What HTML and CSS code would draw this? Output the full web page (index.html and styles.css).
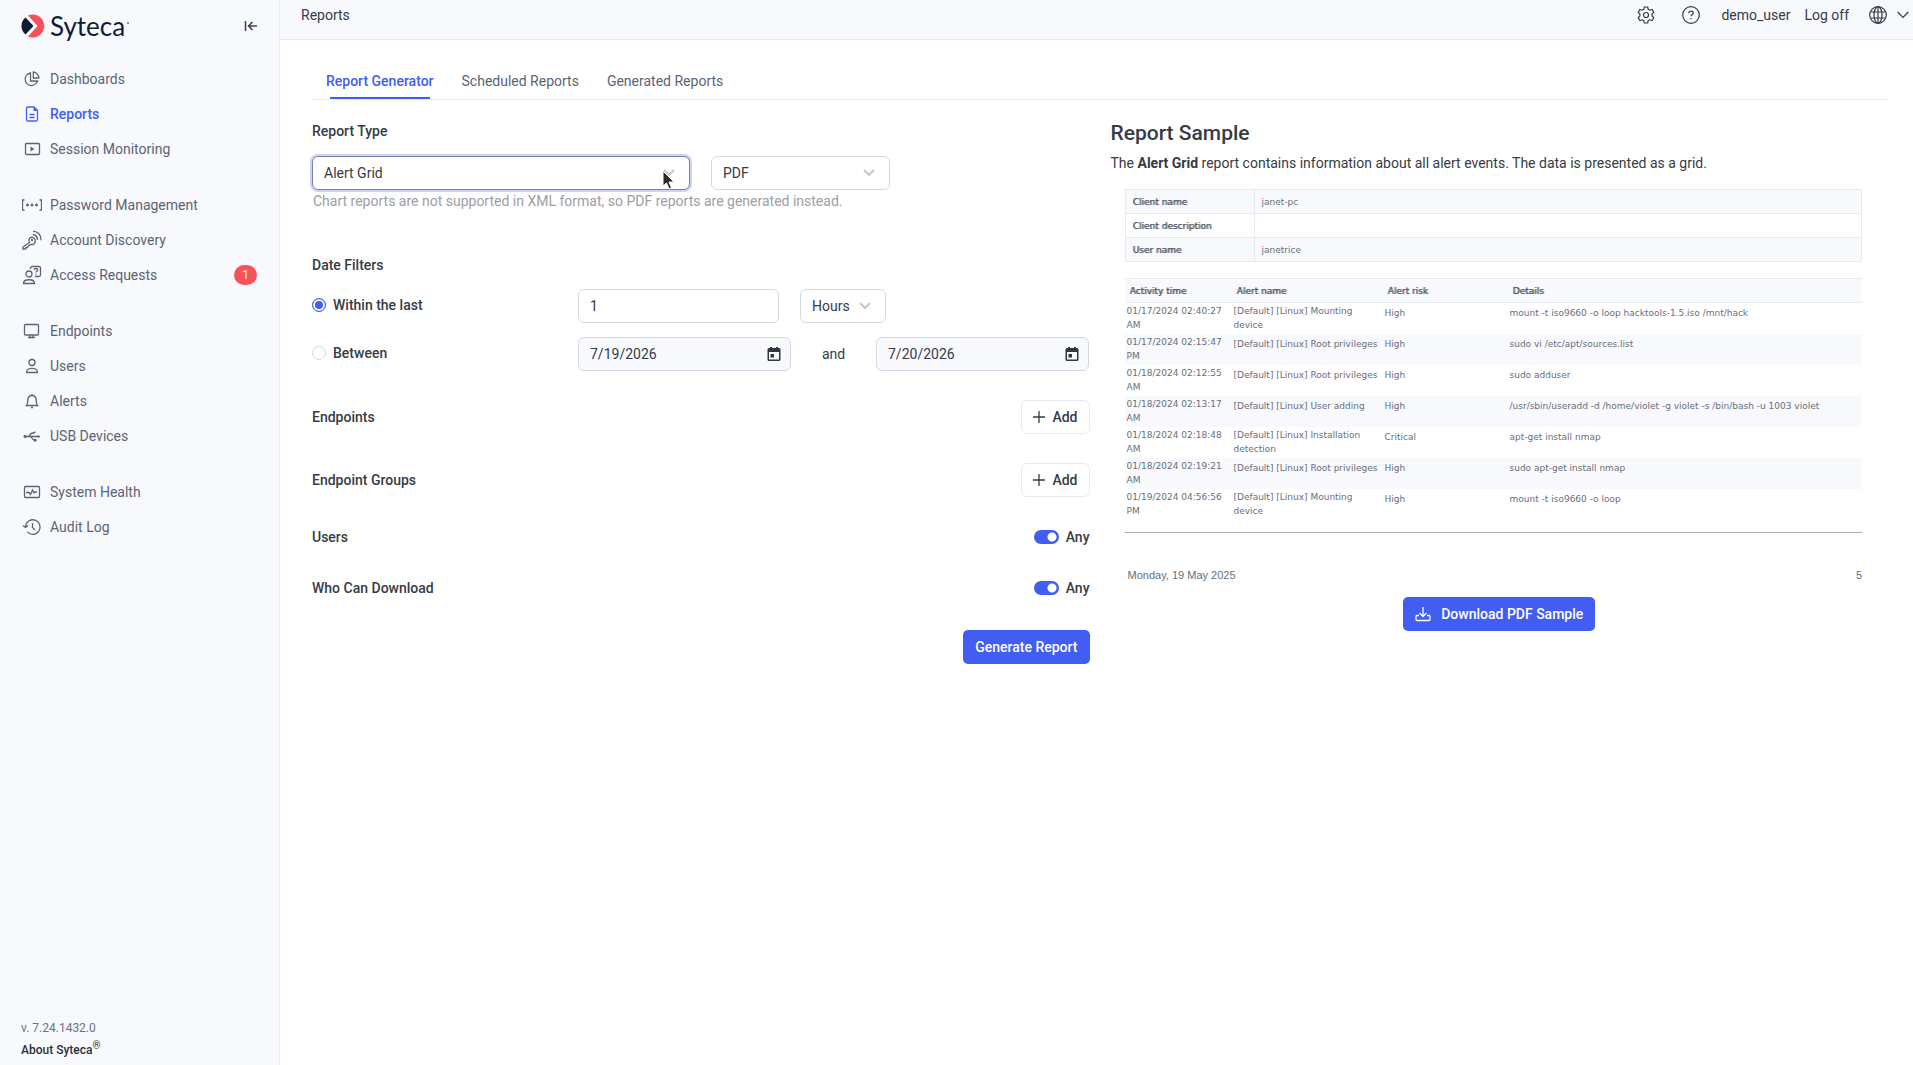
FILE: index.html
```
<!DOCTYPE html>
<html lang="en">
<head>
<meta charset="utf-8">
<meta name="viewport" content="width=device-width, initial-scale=1.0">
<title>Reports - Syteca</title>
<link rel="stylesheet" href="styles.css">
</head>
<body>

<aside class="sidebar">
  <div class="brand">
    <a class="logo" href="#">
      <svg width="24" height="24" viewBox="0 0 24 24">
        <path fill="#f95159" d="M7 1.5A11.5 11.5 0 1 1 7 22.500L16.500 12z"/>
        <path fill="#0f1c34" d="M4.500 3.500L12.500 12l-8 8.500C1.500 18 .5 15 .5 12s1-6 4-8.500z"/>
      </svg>
      <span>Syteca</span><i class="tm"></i>
    </a>
    <button class="collapse" aria-label="Collapse menu">
      <svg width="14" height="12" viewBox="0 0 14 12" fill="none" stroke="#33415c" stroke-width="1.5"><path d="M1.500 1v10M13 6H5M8.500 2L4.500 6l4 4"/></svg>
    </button>
  </div>

  <nav class="menu">
    <ul>
      <li><a href="#"><svg viewBox="0 0 20 20"><path d="M8.500 4A6.300 6.300 0 1 0 15.500 12H8.500z"/><path d="M11.300 3v6h5.500a6 6 0 0 0-5.500-6z"/></svg>Dashboards</a></li>
      <li><a href="#" class="active"><svg viewBox="0 0 20 20"><path d="M6 3h6l3.500 3.500V15.500a1.500 1.500 0 0 1-1.500 1.500H6a1.500 1.500 0 0 1-1.500-1.500v-11A1.500 1.500 0 0 1 6 3zM7.500 10.500h5M7.500 13.500h5"/><path class="solid" d="M11.500 3v4h4z"/></svg>Reports</a></li>
      <li><a href="#"><svg viewBox="0 0 20 20"><rect x="3.500" y="4.500" width="14" height="11" rx="1"/><path class="solid" d="M8.500 7.500v5l4-2.500z"/></svg>Session Monitoring</a></li>
    </ul>
    <ul>
      <li><a href="#"><svg viewBox="0 0 20 20"><path d="M2.500 5H.5v10h2M17.500 5h2v10h-2M4 10h3M5.500 8.500v3M8.500 10h3M10 8.500v3M13 10h3M14.500 8.500v3"/></svg>Password Management</a></li>
      <li><a href="#"><svg viewBox="0 0 20 20"><path d="M7.500 12.500L1 17v2h2.500l.5-1.500h1.500L6.500 16l2-1.500c4 .5 5.500-2 4.500-5-1-2.500-4-3-5.500-1-1 1.200-.8 2.700 0 4z"/><circle cx="10" cy="10" r=".5"/><path d="M11 4.500c3 .5 4.500 2.500 4.500 5.500M11 1.200c5 .5 8 4 8 9"/></svg>Account Discovery</a></li>
      <li><a href="#"><svg viewBox="0 0 20 20"><circle cx="7" cy="9" r="3"/><path d="M1.500 18.500c0-5 11-5 11 0zM8.500 4V3.500A2 2 0 0 1 10.500 1.500h6.500a1.500 1.500 0 0 1 1.500 1.500v7a1.500 1.500 0 0 1-1.500 1.500h-4"/><path d="M12.200 5c0-2 3.500-2 3.500 0 0 1.300-1.700 1.300-1.700 2.500M14 8.700v1"/></svg>Access Requests<span class="badge">1</span></a></li>
    </ul>
    <ul>
      <li><a href="#"><svg viewBox="0 0 20 20"><rect x="2.500" y="3.500" width="14" height="10.500" rx="1"/><path d="M6 16.500h7M8 14v2.500M11 14v2.500"/></svg>Endpoints</a></li>
      <li><a href="#"><svg viewBox="0 0 20 20"><circle cx="10" cy="6.500" r="3"/><path d="M4.500 16.500c0-5.500 11-5.500 11 0z"/></svg>Users</a></li>
      <li><a href="#"><svg viewBox="0 0 20 20"><path d="M4.500 14.500h11c-1.500-1.500-1-4-1.500-6.500-.5-2.500-2-3.500-4-3.500S6.500 5.500 6 8c-.5 2.500 0 5-1.500 6.500zM10 3v1.500M9 16.500h2"/></svg>Alerts</a></li>
      <li><a href="#"><svg viewBox="0 0 20 20"><path d="M3 10.500h14M6 10.500C8 10.500 8 7 10.500 7H12M8 10.500c2 0 2 3.500 4 3.500h1"/><circle class="solid" cx="3" cy="10.500" r="1.500"/><circle class="solid" cx="12.500" cy="6.500" r="1"/><path class="solid" d="M12 13h2.500v2.500H12zM16 9l2.500 1.500L16 12z"/></svg>USB Devices</a></li>
    </ul>
    <ul>
      <li><a href="#"><svg viewBox="0 0 20 20"><rect x="2.500" y="4.500" width="15" height="11" rx="1"/><path d="M4 10.500h3l1.500 2 2-4.500 1.500 3 1-1h2"/></svg>System Health</a></li>
      <li><a href="#"><svg viewBox="0 0 20 20"><path d="M3.500 9.500a7.300 7.300 0 1 1 1.800 5.400M1 8.500l2.500 2 2.500-2M10.500 6v4.500l2.500 2.500"/></svg>Audit Log</a></li>
    </ul>
  </nav>

  <footer class="about">
    <span>v. 7.24.1432.0</span>
    <a href="#">About Syteca<sup>®</sup></a>
  </footer>
</aside>

<div class="page">
  <header class="topbar">
    <h1>Reports</h1>
    <div class="tools">
      <button aria-label="Settings">
        <svg width="18" height="18" viewBox="0 0 18 18"><path d="M7.300 1h3.400l.5 2.300 1.600.9 2.300-.7 1.700 3-1.700 1.600v1.800l1.700 1.600-1.700 3-2.300-.7-1.600.9-.5 2.300H7.300l-.5-2.300-1.600-.9-2.300.7-1.700-3 1.700-1.600V8.100L1.200 6.500l1.700-3 2.300.7 1.600-.9z"/><circle cx="9" cy="9" r="2.500"/></svg>
      </button>
      <button aria-label="Help">
        <svg width="18" height="18" viewBox="0 0 18 18"><circle cx="9" cy="9" r="8.300"/><path d="M6.800 7.300c0-3 4.500-3 4.500-.3 0 1.500-2.200 1.500-2.200 3.300M9 12v1.300"/></svg>
      </button>
      <a href="#" class="user">demo_user</a>
      <a href="#" class="logoff">Log off</a>
      <button class="lang" aria-label="Language">
        <svg width="18" height="18" viewBox="0 0 18 18"><circle cx="9" cy="9" r="8.300"/><ellipse cx="9" cy="9" rx="4" ry="8.300"/><path d="M9 1v16M2 6h14M2 12h14"/></svg>
        <svg width="12" height="8" viewBox="0 0 12 8"><path d="M.7 1L6 6.500 11.300 1"/></svg>
      </button>
    </div>
  </header>

  <nav class="tabs">
    <a href="#" class="active">Report Generator</a>
    <a href="#">Scheduled Reports</a>
    <a href="#">Generated Reports</a>
  </nav>

  <main class="columns">
    <form class="generator">
      <label class="title" for="report-type">Report Type</label>
      <div class="types">
        <div class="select focused">
          <select id="report-type"><option>Alert Grid</option></select>
          <svg class="arrow" viewBox="0 0 12 8"><path d="M1 1l5 5 5-5"/></svg>
          <svg class="pointer" width="14" height="20" viewBox="0 0 14 20"><path d="M1 1v15l3.500-3 2.500 6 2.500-1-2.500-6H12z"/></svg>
        </div>
        <div class="select format">
          <select aria-label="Report format"><option>PDF</option></select>
          <svg class="arrow" viewBox="0 0 12 8"><path d="M1 1l5 5 5-5"/></svg>
        </div>
      </div>
      <p class="hint">Chart reports are not supported in XML format, so PDF reports are generated instead.</p>

      <fieldset class="dates">
        <legend class="title">Date Filters</legend>
        <div class="row">
          <label class="radio"><input type="radio" name="range" checked>Within the last</label>
          <input class="field amount" type="text" value="1" aria-label="Amount">
          <div class="select unit">
            <select aria-label="Unit"><option>Hours</option></select>
            <svg class="arrow" viewBox="0 0 12 8"><path d="M1 1l5 5 5-5"/></svg>
          </div>
        </div>
        <div class="row">
          <label class="radio"><input type="radio" name="range">Between</label>
          <div class="field date">
            <input type="text" value="7/19/2026" aria-label="From">
            <button type="button" aria-label="Pick start date"><svg width="14" height="14" viewBox="0 0 14 14"><path fill-rule="evenodd" d="M2 1h1V0h2v1h4V0h2v1h1a1.500 1.500 0 0 1 1.500 1.500v10A1.500 1.500 0 0 1 12 14H2A1.500 1.500 0 0 1 .5 12.500v-10A1.500 1.500 0 0 1 2 1zM2 5v7.500h10V5zM3.500 7H7v3.500H3.500z"/></svg></button>
          </div>
          <span class="and">and</span>
          <div class="field date">
            <input type="text" value="7/20/2026" aria-label="To">
            <button type="button" aria-label="Pick end date"><svg width="14" height="14" viewBox="0 0 14 14"><path fill-rule="evenodd" d="M2 1h1V0h2v1h4V0h2v1h1a1.500 1.500 0 0 1 1.500 1.500v10A1.500 1.500 0 0 1 12 14H2A1.500 1.500 0 0 1 .5 12.500v-10A1.500 1.500 0 0 1 2 1zM2 5v7.500h10V5zM3.500 7H7v3.500H3.500z"/></svg></button>
          </div>
        </div>
      </fieldset>

      <div class="option">
        <span class="title">Endpoints</span>
        <button type="button" class="add"><svg width="12" height="12" viewBox="0 0 12 12"><path d="M6 0v12M0 6h12"/></svg>Add</button>
      </div>
      <div class="option">
        <span class="title">Endpoint Groups</span>
        <button type="button" class="add"><svg width="12" height="12" viewBox="0 0 12 12"><path d="M6 0v12M0 6h12"/></svg>Add</button>
      </div>
      <div class="option switch-row">
        <span class="title">Users</span>
        <label class="switch"><input type="checkbox" checked>Any</label>
      </div>
      <div class="option switch-row">
        <span class="title">Who Can Download</span>
        <label class="switch"><input type="checkbox" checked>Any</label>
      </div>
      <button type="button" class="primary generate">Generate Report</button>
    </form>

    <section class="sample">
      <h2>Report Sample</h2>
      <p>The <b>Alert Grid</b> report contains information about all alert events. The data is presented as a grid.</p>

      <div class="sheet">
        <table class="client">
          <tr><th scope="row">Client name</th><td>janet-pc</td></tr>
          <tr><th scope="row">Client description</th><td></td></tr>
          <tr><th scope="row">User name</th><td>janetrice</td></tr>
        </table>

        <table class="alerts">
          <thead>
            <tr><th class="time">Activity time</th><th class="name">Alert name</th><th class="risk">Alert risk</th><th>Details</th></tr>
          </thead>
          <tbody>
            <tr><td>01/17/2024 02:40:27 AM</td><td>[Default] [Linux] Mounting device</td><td>High</td><td>mount -t iso9660 -o loop hacktools-1.5.iso /mnt/hack</td></tr>
            <tr><td>01/17/2024 02:15:47 PM</td><td class="single">[Default] [Linux] Root privileges</td><td>High</td><td>sudo vi /etc/apt/sources.list</td></tr>
            <tr><td>01/18/2024 02:12:55 AM</td><td class="single">[Default] [Linux] Root privileges</td><td>High</td><td>sudo adduser</td></tr>
            <tr><td>01/18/2024 02:13:17 AM</td><td class="single">[Default] [Linux] User adding</td><td>High</td><td>/usr/sbin/useradd -d /home/violet -g violet -s /bin/bash -u 1003 violet</td></tr>
            <tr><td>01/18/2024 02:18:48 AM</td><td>[Default] [Linux] Installation detection</td><td>Critical</td><td>apt-get install nmap</td></tr>
            <tr><td>01/18/2024 02:19:21 AM</td><td class="single">[Default] [Linux] Root privileges</td><td>High</td><td>sudo apt-get install nmap</td></tr>
            <tr><td>01/19/2024 04:56:56 PM</td><td>[Default] [Linux] Mounting device</td><td>High</td><td>mount -t iso9660 -o loop</td></tr>
          </tbody>
        </table>

        <div class="sheet-footer"><span>Monday, 19 May 2025</span><span>5</span></div>
      </div>

      <button type="button" class="primary download">
        <svg width="16" height="16" viewBox="0 0 16 16"><path d="M8 1v9M4.500 7L8 10.500 11.500 7M4 9.500H2a1 1 0 0 0-1 1v3a1 1 0 0 0 1 1h12a1 1 0 0 0 1-1v-3a1 1 0 0 0-1-1h-2"/></svg>
        Download PDF Sample
      </button>
    </section>
  </main>
</div>

</body>
</html>
```
FILE: styles.css
```
* { box-sizing: border-box; }

body {
  margin: 0;
  min-height: 100vh;
  display: flex;
  font-family: Roboto, Arial, sans-serif;
  font-size: 14px;
  line-height: 20px;
  color: #363b45;
  background: #fff;
}

a { color: inherit; text-decoration: none; }
ul { list-style: none; margin: 0; padding: 0; }
button, input, select { font: inherit; color: inherit; }
button { border: 0; background: none; padding: 0; cursor: pointer; }

/* sidebar */
.sidebar {
  width: 280px;
  flex: none;
  display: flex;
  flex-direction: column;
  background: #f8f9fc;
  border-right: 1px solid #e8eaee;
}

.brand {
  display: flex;
  justify-content: space-between;
  align-items: center;
  height: 52px;
  padding: 0 21px;
  margin-bottom: 9px;
}
.logo {
  display: flex;
  align-items: center;
  font-family: Lato, sans-serif;
  font-size: 26px;
  color: #0f1c34;
}
.logo span { margin-left: 5px; }
.logo .tm {
  width: 2px;
  height: 2px;
  margin: 0 0 6px 2px;
  background: #8a93a3;
}
.collapse { line-height: 0; }

.menu ul { margin-bottom: 21px; }
.menu a {
  display: flex;
  align-items: center;
  height: 35px;
  padding: 0 22px;
  gap: 8px;
  color: #5b6475;
}
.menu svg {
  width: 20px;
  height: 20px;
  fill: none;
  stroke: currentColor;
  stroke-width: 1.3;
}
.menu .solid { fill: currentColor; stroke: none; }
.menu a.active { color: #415df2; font-weight: 500; }
.badge {
  width: 23px;
  margin-left: auto;
  border-radius: 10px;
  background: #f95159;
  color: #fff;
  font-size: 12px;
  text-align: center;
}

.about {
  display: flex;
  flex-direction: column;
  margin-top: auto;
  padding: 0 21px 4px;
  font-size: 12px;
  line-height: 22px;
  color: #6b7280;
}
.about a { color: #2b303a; font-weight: 500; }
.about sup { font-size: 10px; line-height: 0; }

/* top bar */
.page { flex: 1; min-width: 0; }

.topbar {
  display: flex;
  justify-content: space-between;
  height: 40px;
  padding: 5px 4px 0 21px;
  background: #f8f9fc;
  border-bottom: 1px solid #e8eaee;
}
.topbar h1 { margin: 0; font-size: 14px; font-weight: 400; }
.tools { display: flex; align-items: center; height: 20px; }
.tools svg { display: block; fill: none; stroke: #363b45; stroke-width: 1.2; }
.tools button { margin-right: 27px; }
.tools .user { margin-left: -6px; margin-right: 14px; }
.tools .logoff { margin-right: 20px; }
.tools .lang { display: flex; align-items: center; gap: 10px; margin: 0; }

/* tabs */
.tabs {
  display: flex;
  gap: 28px;
  margin: 31px 25px 0 32px;
  padding: 0 14px;
  border-bottom: 1px solid #e8eaee;
  color: #5b6475;
}
.tabs a { padding-bottom: 8px; }
.tabs .active {
  color: #415df2;
  font-weight: 500;
  /* underline is a bit narrower than the label */
  background: linear-gradient(#415df2, #415df2) center bottom / calc(100% - 8px) 2px no-repeat;
}

.columns {
  display: grid;
  grid-template-columns: 1fr 1fr;
  gap: 21px;
  padding: 21px 25px 0 32px;
}

/* generator form */
.title { font-weight: 500; padding: 0; }
.types { display: flex; gap: 21px; margin-top: 15px; }
.select { position: relative; }
.select select, .field {
  width: 100%;
  height: 34px;
  padding: 0 11px;
  border: 1px solid #d3d8e0;
  border-radius: 6px;
  background: #fff;
  appearance: none;
  outline: none;
}
.arrow {
  position: absolute;
  right: 15px;
  top: 13px;
  width: 12px;
  height: 8px;
  fill: none;
  stroke: #c8c8cc;
  stroke-width: 2;
}
.pointer {
  position: absolute;
  right: 14px;
  top: 14px;
  fill: #2b2b2b;
  stroke: #fff;
}
.select.focused { width: 378px; }
.focused select {
  border-color: #7c80a6;
  box-shadow: 0 0 0 2px #cdd3f7;
}
.format { width: 179px; }
.hint { margin: 1px 0 0 1px; color: #9b9ea3; }

.dates { margin: 44px 0 0; padding: 0; border: 0; }
.row { display: flex; align-items: center; margin-top: 14px; }
.radio {
  width: 266px;
  display: flex;
  align-items: center;
  gap: 7px;
  padding-bottom: 3px;
  font-weight: 500;
}
.radio input {
  appearance: none;
  width: 14px;
  height: 14px;
  margin: 0;
  border: 1px solid #d3d8e0;
  border-radius: 50%;
}
.radio input:checked {
  border-color: #415df2;
  background: #415df2;
  box-shadow: inset 0 0 0 2px #fff;
}
.amount { width: 201px; margin-right: 21px; }
.unit { width: 86px; }
.field.date {
  width: 213px;
  display: flex;
  align-items: center;
  padding-right: 9px;
  background: #f8f9fc;
}
.date input {
  flex: 1;
  min-width: 0;
  border: 0;
  padding: 0;
  background: none;
  outline: none;
}
.date svg { display: block; fill: #33363f; }
.and { width: 85px; text-align: center; }

.option {
  display: flex;
  justify-content: space-between;
  align-items: center;
  margin-top: 29px;
}
.add {
  display: flex;
  align-items: center;
  gap: 7px;
  height: 34px;
  padding: 0 11px;
  border: 1px solid #e8eaee;
  border-radius: 6px;
  font-weight: 500;
}
.add svg { stroke: #363b45; stroke-width: 1.3; }
.switch-row { height: 22px; }
.switch { display: flex; align-items: center; gap: 7px; font-weight: 500; }
.switch input {
  appearance: none;
  width: 25px;
  height: 14px;
  margin: 0;
  border-radius: 7px;
  background: radial-gradient(circle at 18px 7px, #fff 4px, #415df2 5px);
}
.primary {
  height: 34px;
  padding: 0 12px;
  border-radius: 5px;
  background: #415df2;
  color: #fff;
  font-weight: 500;
}
.generate { display: block; margin: 31px 0 0 auto; }

/* sample */
.sample h2 { margin: 0; font-size: 21px; line-height: 24px; font-weight: 500; }
.sample p { margin: 8px 0 0; }
.sheet {
  margin: 16px 26px 0 14px;
  font-family: "DejaVu Sans", Verdana, sans-serif;
  font-size: 9px;
  line-height: 14px;
  color: #686e7b;
}
.sheet table { width: 100%; border-collapse: collapse; table-layout: fixed; }
/* thickened regular weight, the bold cut is too wide for these columns */
.sheet th {
  text-align: left;
  font-weight: 400;
  color: #4d5261;
  text-shadow: 1px 0 #8b8f9a;
}
.client th, .client td { height: 24px; padding: 0 7px; border: 1px solid #e8eaf0; }
.client th { width: 129px; }
.client tr:nth-child(odd) { background: #f8f9fc; }
.alerts { margin-top: 16px; }
.alerts th {
  height: 24px;
  padding: 0 5px;
  background: #f8f9fc;
  border-top: 1px solid #e8eaf0;
  border-bottom: 1px solid #e8eaf0;
}
.alerts .time { width: 107px; }
.alerts .name { width: 151px; }
.alerts .risk { width: 125px; }
.alerts td { height: 31px; padding: 1px 0 2px 2px; vertical-align: top; }
.alerts td:nth-child(n+3), .alerts .single { padding-top: 3px; }
.alerts tbody tr:nth-child(even) { background: #f8f9fc; }
.sheet-footer {
  display: flex;
  justify-content: space-between;
  margin-top: 12px;
  padding: 35px 0 0 3px;
  border-top: 1px solid #aaacb0;
  font-family: "Liberation Sans", Arial, sans-serif;
  font-size: 11px;
}
.download {
  display: flex;
  align-items: center;
  gap: 10px;
  margin: 15px auto 0;
}
.download svg { fill: none; stroke: #fff; stroke-width: 1.3; }
```
